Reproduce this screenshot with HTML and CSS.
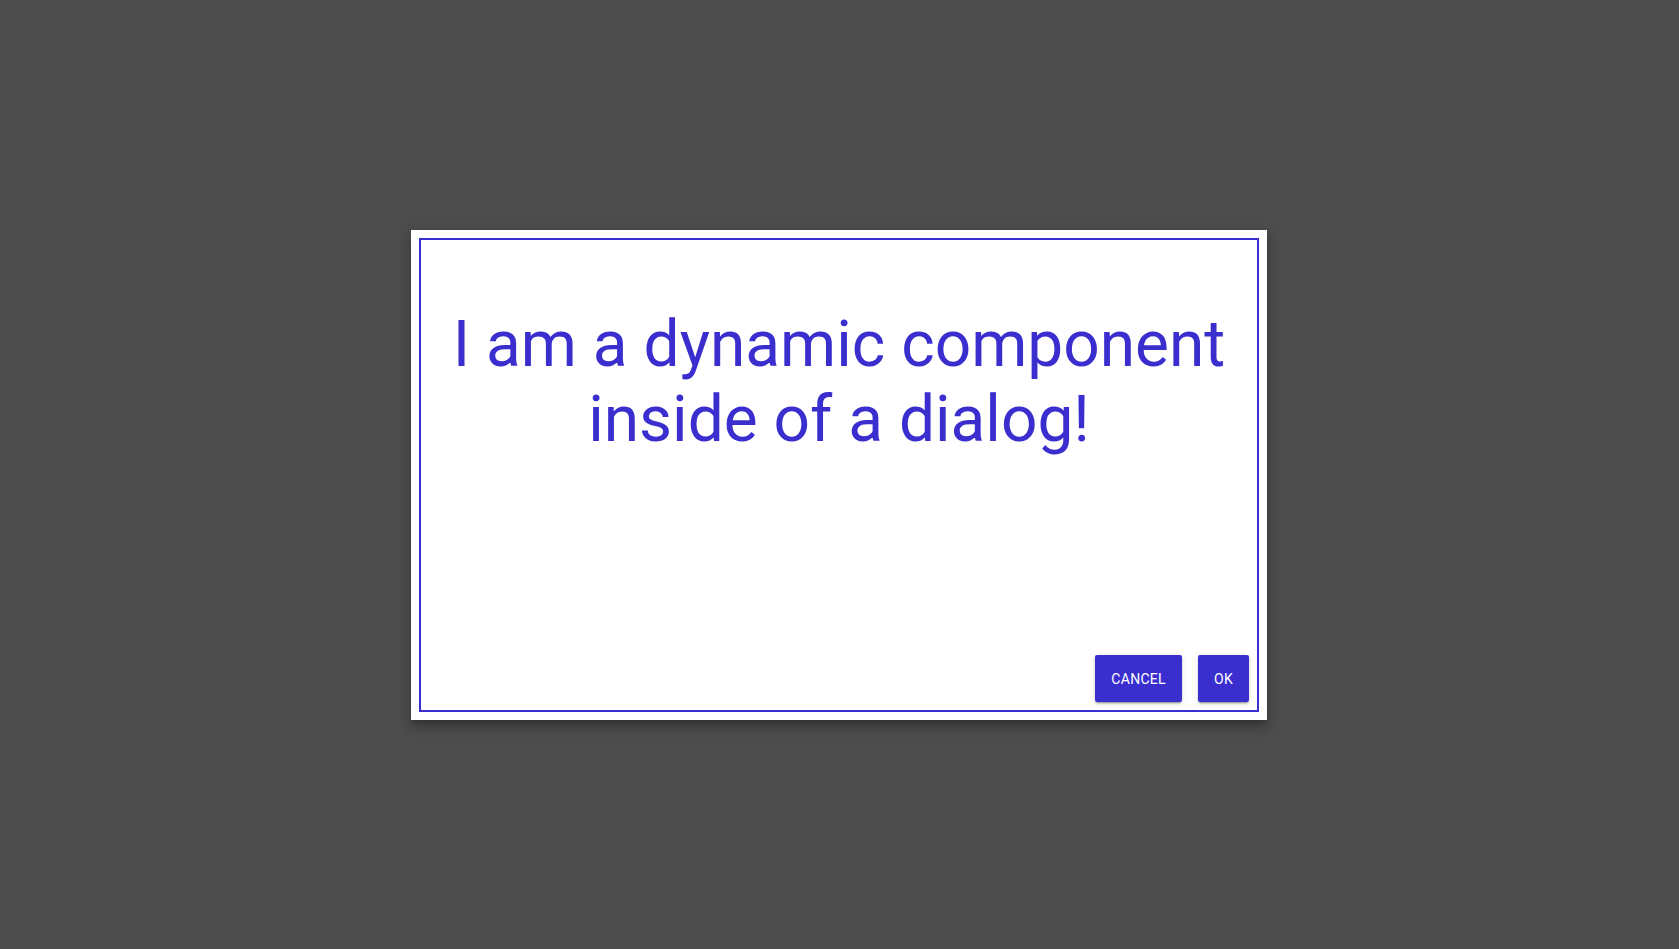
FILE: index.html
```html
<!DOCTYPE html>
<html>
<head>
<meta charset="utf-8">
<link rel="stylesheet" href="styles.css">
</head>
<body>
<div class="backdrop">
  <div class="dialog">
    <div class="frame">
      <h1 class="message">I am a dynamic component inside of a dialog!</h1>
      <div class="actions">
        <button class="btn">CANCEL</button>
        <button class="btn">OK</button>
      </div>
    </div>
  </div>
</div>
</body>
</html>
```
FILE: styles.css
```css
html, body {
  margin: 0;
  padding: 0;
  height: 100%;
}
body {
  background: #4d4d4d;
  font-family: Roboto, "Liberation Sans", sans-serif;
}
.backdrop {
  height: 949px;
  padding: 230px 0 0 411px;
  box-sizing: border-box;
}
.dialog {
  width: 856px;
  height: 490px;
  box-sizing: border-box;
  padding: 8px;
  background: #fff;
  box-shadow: 0 5px 5px -3px rgba(0,0,0,.2), 0 8px 10px 1px rgba(0,0,0,.14), 0 3px 14px 2px rgba(0,0,0,.12);
}
.frame {
  height: 100%;
  box-sizing: border-box;
  border: 2px solid #3a2ecf;
  display: flex;
  flex-direction: column;
  padding: 0 8px 8px;
}
.message {
  margin: 67px 0 0;
  font-size: 64px;
  font-weight: 400;
  line-height: 75px;
  text-align: center;
  color: #3a2ecf;
  flex: 1;
}
.actions {
  display: flex;
  justify-content: flex-end;
  gap: 16px;
}
.btn {
  height: 47px;
  padding: 0 16px;
  border: none;
  border-radius: 2px;
  background: #3a2ecf;
  color: #fff;
  font-family: Roboto, "Liberation Sans", sans-serif;
  font-size: 14px;
  font-weight: 400;
  letter-spacing: 0.3px;
  box-shadow: 0 3px 1px -2px rgba(0,0,0,.2), 0 2px 2px 0 rgba(0,0,0,.14), 0 1px 5px 0 rgba(0,0,0,.12);
}
```
